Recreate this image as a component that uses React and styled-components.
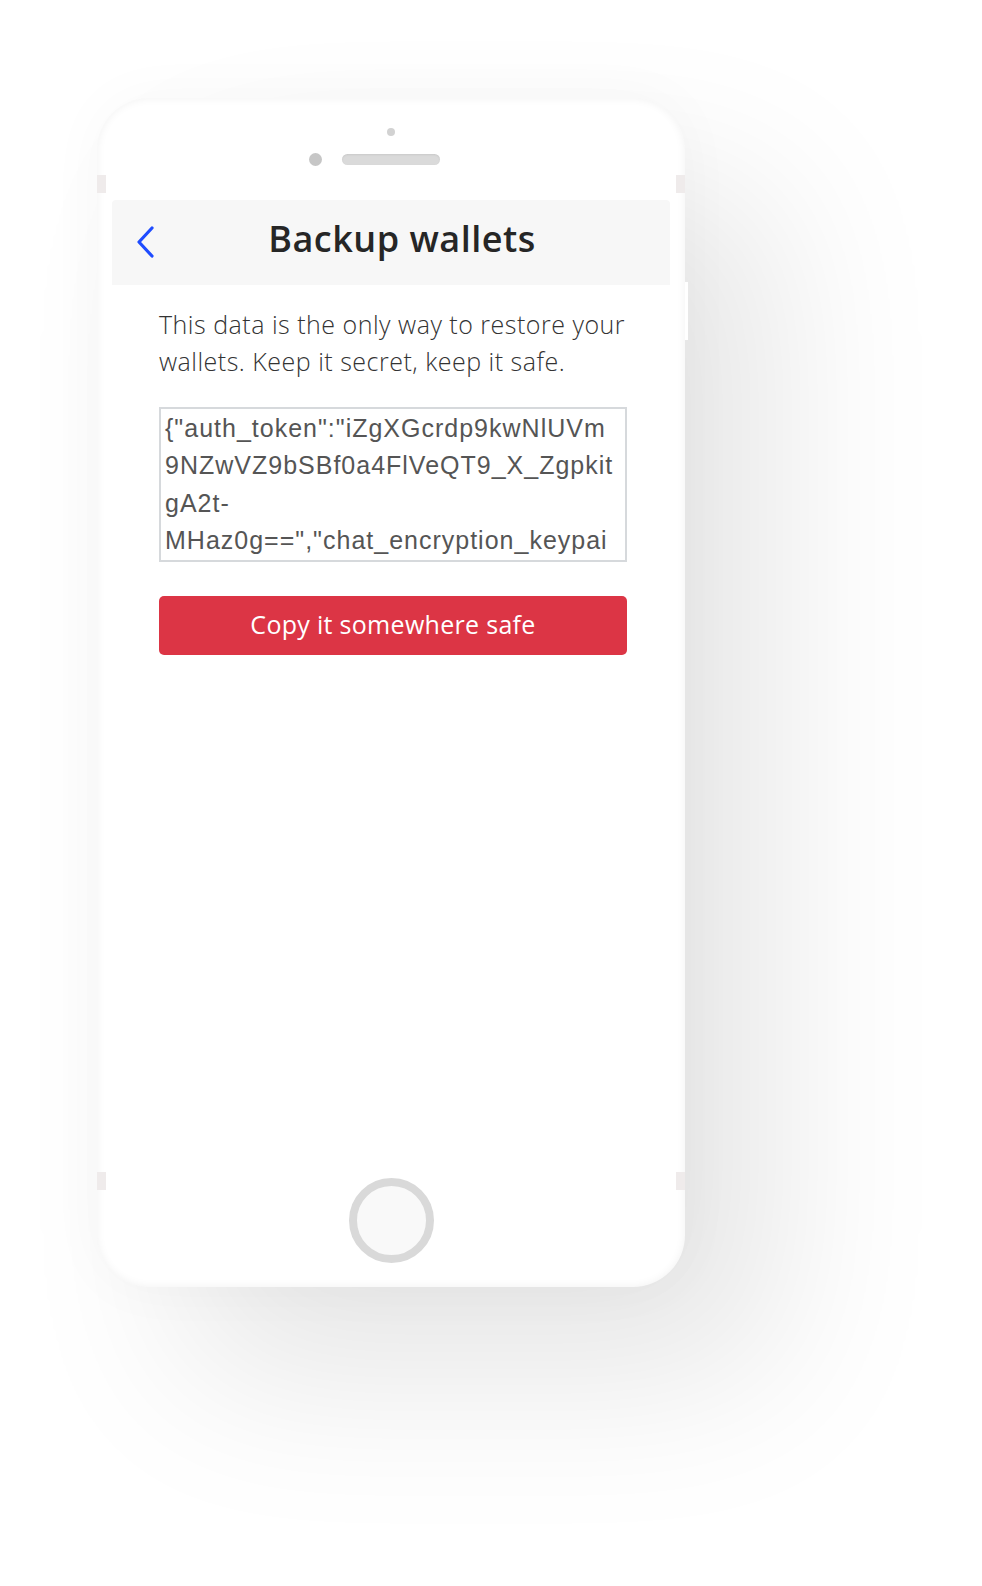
import styled, { createGlobalStyle } from "styled-components";

const GlobalStyle = createGlobalStyle`
  * { box-sizing: border-box; }
  html, body {
    margin: 0;
    padding: 0;
    background: #ffffff;
  }
  body {
    font-family: "Open Sans", "Noto Sans", sans-serif;
  }
`;

const Page = styled.div`
  width: 982px;
  height: 1586px;
  padding: 98px 0 0 97px;
  background: #ffffff;
  overflow: hidden;
`;

// Phone frame
const Phone = styled.div`
  position: relative;
  width: 588px;
  height: 1189px;
  border-radius: 52px;
  background: #ffffff;
  display: flex;
  flex-direction: column;
  box-shadow:
    inset 0 0 10px rgba(0, 0, 0, 0.06),
    90px 90px 170px rgba(0, 0, 0, 0.1),
    0 0 60px rgba(0, 0, 0, 0.03);
`;

const SideNub = styled.span`
  position: absolute;
  width: 9px;
  height: 18px;
  background: #efebeb;
  top: ${(props) => props.top};
  left: ${(props) => (props.side === "left" ? "0" : "auto")};
  right: ${(props) => (props.side === "right" ? "0" : "auto")};
`;

const PowerButton = styled.span`
  position: absolute;
  right: -3px;
  top: 184px;
  width: 3px;
  height: 58px;
  background: #ffffff;
`;

const Earpiece = styled.div`
  height: 102px;
  display: flex;
  flex-direction: column;
  align-items: center;
  padding-top: 30px;
`;

const FrontCamera = styled.span`
  width: 8px;
  height: 8px;
  border-radius: 50%;
  background: #d2d2d2;
`;

const SpeakerRow = styled.div`
  width: 100%;
  margin-top: 17px;
  display: grid;
  grid-template-columns: 1fr auto 1fr;
  align-items: center;
`;

const Sensor = styled.span`
  justify-self: end;
  width: 13px;
  height: 13px;
  margin-right: 20px;
  border-radius: 50%;
  background: #c6c6c6;
`;

const Speaker = styled.span`
  width: 98px;
  height: 11px;
  border-radius: 6px;
  background: #dadada;
  box-shadow: inset 0 1px 2px rgba(0, 0, 0, 0.08);
`;

// Screen
const Screen = styled.div`
  flex: 1;
  margin: 0 15px;
  display: flex;
  flex-direction: column;
`;

const NavBar = styled.div`
  height: 85px;
  background: #f7f7f7;
  border-radius: 4px 4px 0 0;
  display: flex;
  align-items: center;
  padding: 0 20px 8px 24px;
`;

const BackButton = styled.button`
  border: none;
  background: none;
  padding: 0;
  width: 18px;
  height: 32px;
  margin-top: 6px;
  display: flex;
  cursor: pointer;
`;

const Title = styled.h1`
  flex: 1;
  margin: 0;
  text-align: center;
  font-family: "Open Sans", "Noto Sans", sans-serif;
  font-weight: 600;
  font-size: 36px;
  line-height: 44px;
  color: #262626;
  letter-spacing: 0.5px;
`;

const Content = styled.div`
  padding: 21px 40px 0 47px;
  display: flex;
  flex-direction: column;
`;

const Description = styled.p`
  margin: 0;
  font-family: "Open Sans", "Noto Sans", sans-serif;
  font-weight: 300;
  font-size: 25px;
  line-height: 37px;
  letter-spacing: 0.5px;
  color: #333333;
`;

const BackupField = styled.textarea`
  margin-top: 27px;
  width: 468px;
  height: 155px;
  border: 2px solid #d6d9dc;
  border-radius: 0;
  padding: 1px 9px 0 4px;
  font-family: "Liberation Sans", "Open Sans", sans-serif;
  font-size: 25px;
  line-height: 37.3px;
  letter-spacing: 1px;
  color: #555555;
  overflow: hidden;
  resize: none;
  outline: none;
`;

const CopyButton = styled.button`
  margin-top: 34px;
  width: 468px;
  height: 59px;
  border: none;
  border-radius: 5px;
  padding: 0 0 4px;
  background: #dc3545;
  color: #ffffff;
  font-family: "Open Sans", "Noto Sans", sans-serif;
  font-size: 25px;
  letter-spacing: 0.3px;
  cursor: pointer;
`;

const HomeArea = styled.div`
  height: 109px;
  display: flex;
  justify-content: center;
`;

const HomeButton = styled.span`
  width: 85px;
  height: 85px;
  border-radius: 50%;
  border: 8px solid #d9d9d9;
  background: #f9f9f9;
`;

const backupData =
  '{"auth_token":"iZgXGcrdp9kwNlUVm9NZwVZ9bSBf0a4FlVeQT9_X_ZgpkitgA2t-MHaz0g==","chat_encryption_keypair":{"public_key":"c1Hq2TQk8vX0rJpE4mN7yUaZ3bWfL6dS","secret_key":"Yp0sK3vRt8nB2wQe5xJ7mHcL9aZ4uFg1"},"wallets":[{"currency":"BTC","address":"1F3sAm6ZtwLAUnj7d38pGFxtP3RVEvtsbV"}]}';

const App = () => {
  return (
    <>
      <GlobalStyle />
      <Page>
        <Phone>
          <SideNub side="left" top="77px" />
          <SideNub side="right" top="77px" />
          <SideNub side="left" top="1074px" />
          <SideNub side="right" top="1074px" />
          <PowerButton />

          <Earpiece>
            <FrontCamera />
            <SpeakerRow>
              <Sensor />
              <Speaker />
            </SpeakerRow>
          </Earpiece>

          <Screen>
            <NavBar>
              <BackButton aria-label="Back">
                <svg width="18" height="32" viewBox="0 0 18 32" fill="none">
                  <path
                    d="M16 2 L3 16 L16 30"
                    stroke="#1f4cff"
                    strokeWidth="3.2"
                    strokeLinecap="round"
                    strokeLinejoin="round"
                  />
                </svg>
              </BackButton>
              <Title>Backup wallets</Title>
            </NavBar>

            <Content>
              <Description>
                This data is the only way to restore your wallets. Keep it
                secret, keep it safe.
              </Description>
              <BackupField readOnly value={backupData} />
              <CopyButton>Copy it somewhere safe</CopyButton>
            </Content>
          </Screen>

          <HomeArea>
            <HomeButton />
          </HomeArea>
        </Phone>
      </Page>
    </>
  );
};

export default App;
